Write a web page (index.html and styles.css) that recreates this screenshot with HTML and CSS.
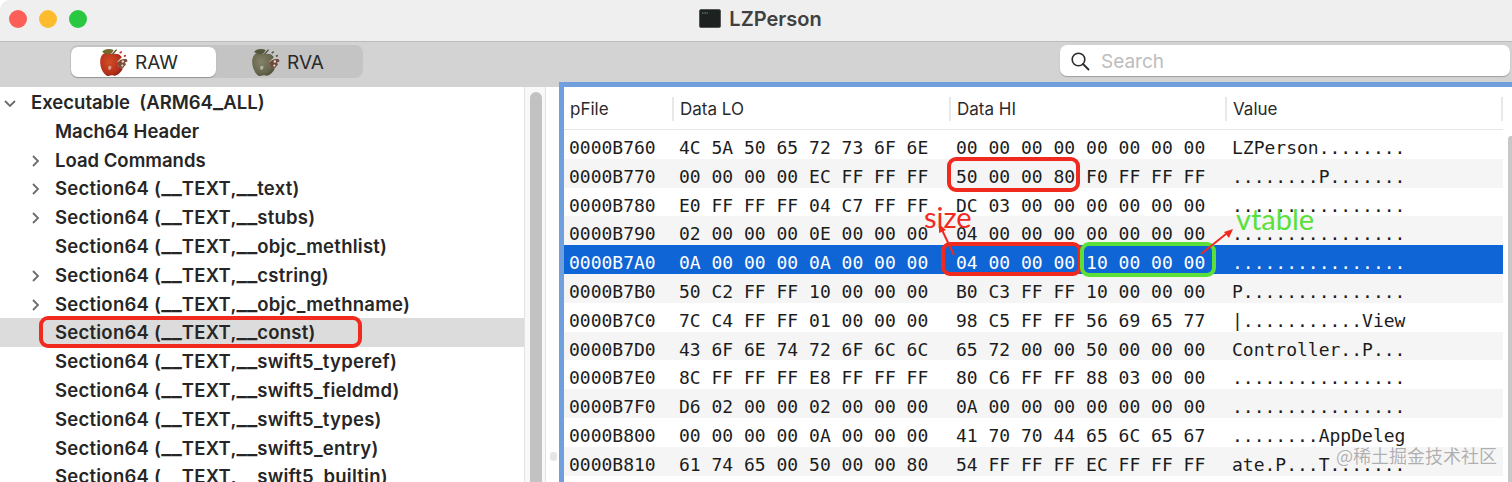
FILE: index.html
```html
<!DOCTYPE html>
<html lang="en">
<head>
<meta charset="utf-8">
<title>LZPerson</title>
<link rel="stylesheet" href="styles.css">
</head>
<body>
<div class="window">
  <header class="titlebar">
    <div class="lights"><i class="light red"></i><i class="light yellow"></i><i class="light green"></i></div>
    <div class="title">
      <svg class="term" width="22" height="19" viewBox="0 0 22 19"><rect x="0.5" y="0.5" width="21" height="18" rx="1.5" fill="#1d2120" stroke="#555"/><path d="M3 4h6" stroke="#6fa86f" stroke-width="1.2" stroke-dasharray="1 .6"/></svg>
      <span>LZPerson</span>
    </div>
  </header>
  <div class="toolbar">
    <div class="segments">
      <div class="segment active">
        <svg class="apple raw" width="29" height="29" viewBox="0 0 28 28">
          <defs>
            <radialGradient id="redBody" cx=".4" cy=".4" r=".7"><stop offset="0" stop-color="#d24c26"/><stop offset=".7" stop-color="#b5301a"/><stop offset="1" stop-color="#7d1e10"/></radialGradient>
            <radialGradient id="oliveBody" cx=".4" cy=".4" r=".7"><stop offset="0" stop-color="#84836a"/><stop offset=".7" stop-color="#66654c"/><stop offset="1" stop-color="#474733"/></radialGradient>
          </defs>
          <path fill="url(#redBody)" d="M13 6C9 3 3 4 1.500 10 0 16 3 25 8 27c2 .5 4-1 6-.5 3 1 7-2.500 9-6.500l-4-2-1-5 4-4c-2-4-6-4-9-3z"/>
          <path fill="#6e6a2b" d="M3 3.500C6 .5 11 .5 14 2c-.5 2.500-2.500 4-5 4-2.500 0-4.500-1-6-2.500z"/>
          <path d="M13 6l4-4.500" stroke="#5b3a22" stroke-width="1.200" fill="none"/>
          <path fill="#7a4a3a" d="M18 14c2-3 6-4 9-3l.5 2-2.500 1 1 2-3 3.500-4-1z"/>
          <circle cx="23" cy="13" r="1.200" fill="#ead9c4"/><circle cx="22.500" cy="17" r="1.100" fill="#ead9c4"/>
          <path d="M20 5l2-1.500M24 8l2-.8" stroke="#c4281c" stroke-width="1.400"/>
          <path d="M9 18c1-1.500 3-1 3 .5s-1 2.500-2 2.500-1.500-1.500-1-3z" fill="#f3d8cc" opacity=".6"/>
        </svg>
        <span>RAW</span>
      </div>
      <div class="segment">
        <svg class="apple rva" width="29" height="29" viewBox="0 0 28 28">
          <path fill="url(#oliveBody)" d="M13 6C9 3 3 4 1.500 10 0 16 3 25 8 27c2 .5 4-1 6-.5 3 1 7-2.500 9-6.500l-4-2-1-5 4-4c-2-4-6-4-9-3z"/>
          <path fill="#55573d" d="M3 3.500C6 .5 11 .5 14 2c-.5 2.500-2.500 4-5 4-2.500 0-4.500-1-6-2.500z"/>
          <path d="M13 6l4-4.500" stroke="#4b4a38" stroke-width="1.200" fill="none"/>
          <path fill="#6e4a3e" d="M18 14c2-3 6-4 9-3l.5 2-2.500 1 1 2-3 3.500-4-1z"/>
          <circle cx="23" cy="13" r="1.200" fill="#ead9c4"/><circle cx="22.500" cy="17" r="1.100" fill="#ead9c4"/>
          <path d="M20 5l2-1.500M24 8l2-.8" stroke="#55543f" stroke-width="1.400"/>
          <path d="M9 18c1-1.500 3-1 3 .5s-1 2.500-2 2.500-1.500-1.500-1-3z" fill="#ddd" opacity=".6"/>
        </svg>
        <span>RVA</span>
      </div>
    </div>
    <div class="search">
      <svg width="20" height="20" viewBox="0 0 20 20"><circle cx="8.500" cy="8.500" r="6.300" fill="none" stroke="#2a2a2a" stroke-width="1.600"/><path d="M13 13l5.500 5.500" stroke="#2a2a2a" stroke-width="1.800" stroke-linecap="round"/></svg>
      <span class="placeholder">Search</span>
    </div>
  </div>
  <main class="main">
    <nav class="tree">
      <div class="node top"><svg class="chev" width="14" height="10" viewBox="0 0 14 10"><path d="M2 2l5 5 5-5"/></svg>Executable&nbsp; (ARM64<b class="us">_</b>ALL)</div>
      <div class="node">Mach64 Header</div>
      <div class="node"><svg class="chev side" width="10" height="14" viewBox="0 0 10 14"><path d="M2 2l5 5-5 5"/></svg>Load Commands</div>
      <div class="node sec"><svg class="chev side" width="10" height="14" viewBox="0 0 10 14"><path d="M2 2l5 5-5 5"/></svg>Section64 (<b class="us">__</b>TEXT,<b class="us">__</b>text)</div>
      <div class="node sec"><svg class="chev side" width="10" height="14" viewBox="0 0 10 14"><path d="M2 2l5 5-5 5"/></svg>Section64 (<b class="us">__</b>TEXT,<b class="us">__</b>stubs)</div>
      <div class="node sec">Section64 (<b class="us">__</b>TEXT,<b class="us">__</b>objc_methlist)</div>
      <div class="node sec"><svg class="chev side" width="10" height="14" viewBox="0 0 10 14"><path d="M2 2l5 5-5 5"/></svg>Section64 (<b class="us">__</b>TEXT,<b class="us">__</b>cstring)</div>
      <div class="node sec"><svg class="chev side" width="10" height="14" viewBox="0 0 10 14"><path d="M2 2l5 5-5 5"/></svg>Section64 (<b class="us">__</b>TEXT,<b class="us">__</b>objc_methname)</div>
      <div class="node sec picked">Section64 (<b class="us">__</b>TEXT,<b class="us">__</b>const)</div>
      <div class="node sec">Section64 (<b class="us">__</b>TEXT,<b class="us">__</b>swift5_typeref)</div>
      <div class="node sec">Section64 (<b class="us">__</b>TEXT,<b class="us">__</b>swift5_fieldmd)</div>
      <div class="node sec">Section64 (<b class="us">__</b>TEXT,<b class="us">__</b>swift5_types)</div>
      <div class="node sec">Section64 (<b class="us">__</b>TEXT,<b class="us">__</b>swift5_entry)</div>
      <div class="node sec">Section64 (<b class="us">__</b>TEXT,<b class="us">__</b>swift5_builtin)</div>
    </nav>
    <div class="tree-scroll"><div class="thumb"></div></div>
    <div class="splitter"><i class="grip"></i></div>
    <section class="table">
      <div class="thead">
        <div>pFile</div><div>Data LO</div><div>Data HI</div><div>Value</div>
      </div>
      <div class="tbody">
        <div class="row"><span>0000B760</span><span>4C 5A 50 65 72 73 6F 6E</span><span>00 00 00 00 00 00 00 00</span><span>LZPerson........</span></div>
        <div class="row"><span>0000B770</span><span>00 00 00 00 EC FF FF FF</span><span>50 00 00 80 F0 FF FF FF</span><span>........P.......</span></div>
        <div class="row"><span>0000B780</span><span>E0 FF FF FF 04 C7 FF FF</span><span>DC 03 00 00 00 00 00 00</span><span>................</span></div>
        <div class="row"><span>0000B790</span><span>02 00 00 00 0E 00 00 00</span><span>04 00 00 00 00 00 00 00</span><span>................</span></div>
        <div class="row selected"><span>0000B7A0</span><span>0A 00 00 00 0A 00 00 00</span><span>04 00 00 00 10 00 00 00</span><span>................</span></div>
        <div class="row"><span>0000B7B0</span><span>50 C2 FF FF 10 00 00 00</span><span>B0 C3 FF FF 10 00 00 00</span><span>P...............</span></div>
        <div class="row"><span>0000B7C0</span><span>7C C4 FF FF 01 00 00 00</span><span>98 C5 FF FF 56 69 65 77</span><span>|...........View</span></div>
        <div class="row"><span>0000B7D0</span><span>43 6F 6E 74 72 6F 6C 6C</span><span>65 72 00 00 50 00 00 00</span><span>Controller..P...</span></div>
        <div class="row"><span>0000B7E0</span><span>8C FF FF FF E8 FF FF FF</span><span>80 C6 FF FF 88 03 00 00</span><span>................</span></div>
        <div class="row"><span>0000B7F0</span><span>D6 02 00 00 02 00 00 00</span><span>0A 00 00 00 00 00 00 00</span><span>................</span></div>
        <div class="row"><span>0000B800</span><span>00 00 00 00 0A 00 00 00</span><span>41 70 70 44 65 6C 65 67</span><span>........AppDeleg</span></div>
        <div class="row"><span>0000B810</span><span>61 74 65 00 50 00 00 80</span><span>54 FF FF FF EC FF FF FF</span><span>ate.P...T.......</span></div>
      </div>
      <div class="table-scroll"></div>
    </section>
  </main>
</div>

<div class="mark mark-const"></div>
<div class="mark mark-lo"></div>
<div class="mark mark-size"></div>
<div class="mark mark-vtable"></div>
<span class="note note-size">size</span>
<span class="note note-vtable">vtable</span>
<svg class="arrows" width="1512" height="482" viewBox="0 0 1512 482">
  <path d="M954 255L942 230" stroke="#f02a1e" stroke-width="2" fill="none"/>
  <path d="M939 224l7 6-7 3z" fill="#f02a1e"/>
  <path d="M1201 254L1226 234" stroke="#f02a1e" stroke-width="2" fill="none"/>
  <path d="M1233 229l-4 9-5-6z" fill="#f02a1e"/>
</svg>
<span class="watermark">@稀土掘金技术社区</span>
</body>
</html>
```
FILE: styles.css
```css
* { box-sizing: border-box; }
html, body { margin: 0; padding: 0; height: 482px; overflow: hidden; background: #fff; }
body { position: relative; font-family: "Inter", "Liberation Sans", sans-serif; color: #222; }

.window { width: 1512px; height: 482px; display: flex; flex-direction: column; }

.titlebar { height: 42px; flex: none; background: #efefef; border-bottom: 1px solid #bcbcbc; border-top-left-radius: 10px; display: flex; align-items: center; justify-content: center; position: relative; }
.lights { position: absolute; left: 9px; top: 10px; display: flex; gap: 12px; }
.light { display: block; width: 18px; height: 18px; border-radius: 50%; }
.red { background: #fb5f57; }
.yellow { background: #fdbc2e; }
.green { background: #2ac840; }
.title { display: flex; align-items: center; gap: 8px; font-size: 20px; font-weight: 600; color: #404040; margin-left: 9px; margin-top: -4px; }
.term { display: block; }

.toolbar { height: 45px; flex: none; background: #d3d3d3; display: flex; justify-content: space-between; padding: 3px 2px 0 70px; }
.segments { width: 293px; height: 33px; background: #c4c4c4; border-radius: 8px; display: flex; padding: 2px 0 2px 1px; }
.segment { flex: none; width: 145px; display: flex; align-items: center; gap: 7px; padding-left: 28px; font-size: 19px; color: #2a2a2a; border-radius: 7px; height: 30px; }
.segment.active { background: #fff; box-shadow: 0 1px 1px rgba(0, 0, 0, .25); }
.segment + .segment { padding-left: 35px; }
.apple { flex: none; }

.search { width: 450px; height: 31px; background: #fff; border-radius: 7px; box-shadow: 0 1px 1px rgba(0, 0, 0, .25); display: flex; align-items: center; gap: 11px; padding-left: 10px; font-size: 19px; color: #bdbdbd; }
.placeholder { margin-top: 2px; }

.main { flex: 1; min-height: 0; display: flex; background: #fff; }

.tree { width: 524px; flex: none; font-size: 18.500px; font-weight: 600; color: #262626; overflow: hidden; }
.node { height: 28.8px; line-height: 29px; padding-left: 55px; white-space: nowrap; position: relative; }
.node.top { padding-left: 31px; margin-top: 1px; }
.node.sec { letter-spacing: .25px; }
.node.picked { background: #dcdcdc; }
.us { font-size: 22px; font-weight: 600; line-height: 0; vertical-align: 1px; letter-spacing: 0; }
.chev { position: absolute; left: 31px; top: 8px; fill: none; stroke: #6c6c6c; stroke-width: 1.800; }
.top .chev { left: 3px; top: 11px; }

.tree-scroll { width: 22px; flex: none; background: #f8f8f8; border-left: 1px solid #e3e3e3; border-right: 1px solid #e3e3e3; padding: 5px 0 0 5px; }
.thumb { width: 12px; height: 400px; border-radius: 6px; background: #c2c2c2; }
.splitter { width: 18px; flex: none; background: #fff; position: relative; }
.grip { position: absolute; left: 4px; top: 365px; width: 7px; height: 9px; border-radius: 3px; background: #e6e6e6; }

.table { flex: 1; min-width: 0; background: #fff; box-shadow: 0 0 0 5px #6f9fdc; position: relative; }
.thead, .row { display: grid; grid-template-columns: 110px 277px 276px 1fr; width: 939px; }
.thead { height: 43px; font-size: 17px; color: #2a2a2a; border-bottom: 1px solid #e6e6e6; padding-top: 10px; }
.thead div { height: 24px; line-height: 25px; padding-left: 6px; border-right: 2px solid #e8e8e8; }
.row { height: 28.8px; font-family: "DejaVu Sans Mono", "Liberation Mono", monospace; font-size: 18px; line-height: 36px; color: #1c1c1c; white-space: pre; overflow: hidden; }
.row span { padding-left: 5px; }
.row:nth-child(even) { background: #f5f5f5; }
.row.selected { background: #0f65d6; color: #fff; }
.table-scroll { position: absolute; right: 0; top: 49px; width: 4px; bottom: 0; background: #c8c8c8; border-radius: 3px 0 0 0; }

.mark { position: absolute; border-radius: 9px; border: 4px solid #f02a1e; }
.mark-const { left: 39px; top: 316px; width: 323px; height: 32px; }
.mark-lo { left: 947px; top: 157px; width: 133px; height: 35px; }
.mark-size { left: 941px; top: 242px; width: 141px; height: 34px; }
.mark-vtable { left: 1080px; top: 242px; width: 136px; height: 35px; border-color: #5be03a; }

.note { position: absolute; font-size: 29px; line-height: 30px; font-family: "Lato", "Liberation Sans", sans-serif; font-weight: 400; }
.note-size { left: 924px; top: 202px; color: #f02a1e; }
.note-vtable { left: 1236px; top: 204px; color: #5be03a; }
.arrows { position: absolute; left: 0; top: 0; pointer-events: none; }

.watermark { position: absolute; left: 1336px; top: 442px; font-family: "Noto Sans CJK SC", sans-serif; font-size: 18px; line-height: 26px; color: rgba(150, 150, 150, .75); text-shadow: 0 0 1px rgba(255, 255, 255, .8); white-space: nowrap; }
```
